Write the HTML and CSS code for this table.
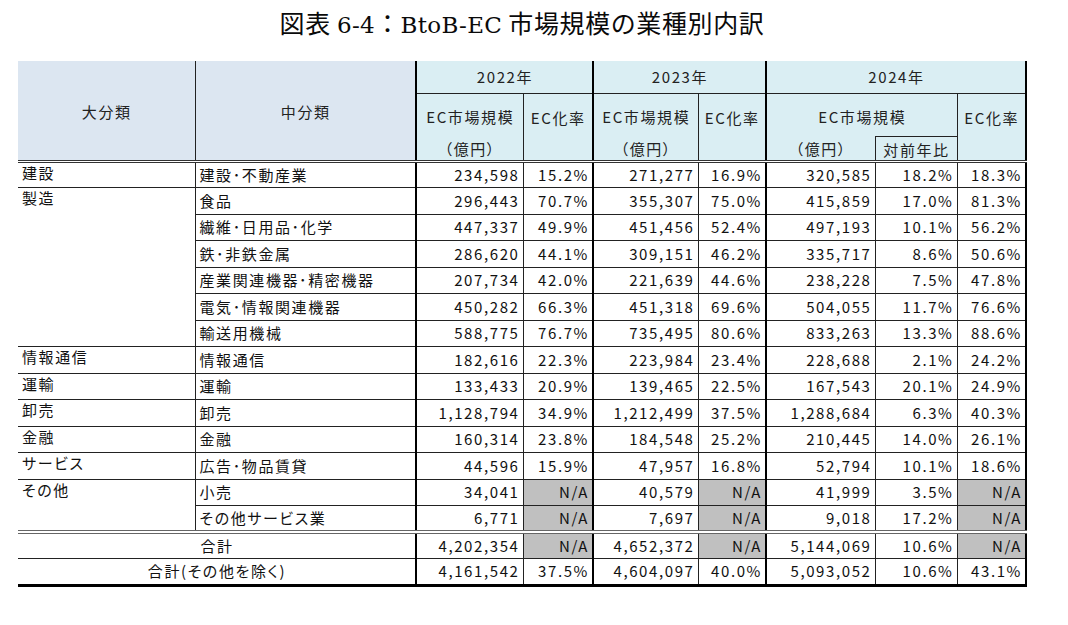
FILE: index.html
```html
<!DOCTYPE html>
<html lang="ja">
<head>
<meta charset="utf-8">
<title>BtoB-EC 市場規模の業種別内訳</title>
<link rel="stylesheet" href="styles.css">
</head>
<body>
<div class="page">
  <h1 class="title">図表 <span class="lat">6-4</span><span class="colon">：</span><span class="lat">BtoB-EC</span> 市場規模の業種別内訳</h1>
  <table class="tbl">
    <colgroup>
      <col class="w-dai"><col class="w-chu">
      <col class="w-m22"><col class="w-r22">
      <col class="w-m23"><col class="w-r23">
      <col class="w-m24"><col class="w-y24"><col class="w-r24">
    </colgroup>
    <thead>
      <tr class="h1">
        <th rowspan="3" class="hl dai">大分類</th>
        <th rowspan="3" class="hl chu">中分類</th>
        <th colspan="2" class="hy yr ys">2022年</th>
        <th colspan="2" class="hy yr ys">2023年</th>
        <th colspan="3" class="hy yr ys ye">2024年</th>
      </tr>
      <tr class="h2">
        <th class="hy mk ys">EC市場規模</th>
        <th rowspan="2" class="hy rt vl">EC化率</th>
        <th class="hy mk ys">EC市場規模</th>
        <th rowspan="2" class="hy rt vl">EC化率</th>
        <th colspan="2" class="hy mk ys">EC市場規模</th>
        <th rowspan="2" class="hy rt vl ye">EC化率</th>
      </tr>
      <tr class="h3">
        <th class="hy unit ys">（億円）</th>
        <th class="hy unit ys">（億円）</th>
        <th class="hy unit ys">（億円）</th>
        <th class="hy unit yoy">対前年比</th>
      </tr>
    </thead>
    <tbody>
      <tr class="first">
        <td class="dai">建設</td><td class="chu">建設･不動産業</td>
        <td class="n ys">234,598</td><td class="n vl">15.2%</td>
        <td class="n ys">271,277</td><td class="n vl">16.9%</td>
        <td class="n ys">320,585</td><td class="n vl">18.2%</td><td class="n vl ye">18.3%</td>
      </tr>
      <tr>
        <td class="dai" rowspan="6">製造</td><td class="chu">食品</td>
        <td class="n ys">296,443</td><td class="n vl">70.7%</td>
        <td class="n ys">355,307</td><td class="n vl">75.0%</td>
        <td class="n ys">415,859</td><td class="n vl">17.0%</td><td class="n vl ye">81.3%</td>
      </tr>
      <tr>
        <td class="chu">繊維･日用品･化学</td>
        <td class="n ys">447,337</td><td class="n vl">49.9%</td>
        <td class="n ys">451,456</td><td class="n vl">52.4%</td>
        <td class="n ys">497,193</td><td class="n vl">10.1%</td><td class="n vl ye">56.2%</td>
      </tr>
      <tr>
        <td class="chu">鉄･非鉄金属</td>
        <td class="n ys">286,620</td><td class="n vl">44.1%</td>
        <td class="n ys">309,151</td><td class="n vl">46.2%</td>
        <td class="n ys">335,717</td><td class="n vl">8.6%</td><td class="n vl ye">50.6%</td>
      </tr>
      <tr>
        <td class="chu">産業関連機器･精密機器</td>
        <td class="n ys">207,734</td><td class="n vl">42.0%</td>
        <td class="n ys">221,639</td><td class="n vl">44.6%</td>
        <td class="n ys">238,228</td><td class="n vl">7.5%</td><td class="n vl ye">47.8%</td>
      </tr>
      <tr>
        <td class="chu">電気･情報関連機器</td>
        <td class="n ys">450,282</td><td class="n vl">66.3%</td>
        <td class="n ys">451,318</td><td class="n vl">69.6%</td>
        <td class="n ys">504,055</td><td class="n vl">11.7%</td><td class="n vl ye">76.6%</td>
      </tr>
      <tr>
        <td class="chu">輸送用機械</td>
        <td class="n ys">588,775</td><td class="n vl">76.7%</td>
        <td class="n ys">735,495</td><td class="n vl">80.6%</td>
        <td class="n ys">833,263</td><td class="n vl">13.3%</td><td class="n vl ye">88.6%</td>
      </tr>
      <tr>
        <td class="dai">情報通信</td><td class="chu">情報通信</td>
        <td class="n ys">182,616</td><td class="n vl">22.3%</td>
        <td class="n ys">223,984</td><td class="n vl">23.4%</td>
        <td class="n ys">228,688</td><td class="n vl">2.1%</td><td class="n vl ye">24.2%</td>
      </tr>
      <tr>
        <td class="dai">運輸</td><td class="chu">運輸</td>
        <td class="n ys">133,433</td><td class="n vl">20.9%</td>
        <td class="n ys">139,465</td><td class="n vl">22.5%</td>
        <td class="n ys">167,543</td><td class="n vl">20.1%</td><td class="n vl ye">24.9%</td>
      </tr>
      <tr>
        <td class="dai">卸売</td><td class="chu">卸売</td>
        <td class="n ys">1,128,794</td><td class="n vl">34.9%</td>
        <td class="n ys">1,212,499</td><td class="n vl">37.5%</td>
        <td class="n ys">1,288,684</td><td class="n vl">6.3%</td><td class="n vl ye">40.3%</td>
      </tr>
      <tr>
        <td class="dai">金融</td><td class="chu">金融</td>
        <td class="n ys">160,314</td><td class="n vl">23.8%</td>
        <td class="n ys">184,548</td><td class="n vl">25.2%</td>
        <td class="n ys">210,445</td><td class="n vl">14.0%</td><td class="n vl ye">26.1%</td>
      </tr>
      <tr>
        <td class="dai">サービス</td><td class="chu">広告･物品賃貸</td>
        <td class="n ys">44,596</td><td class="n vl">15.9%</td>
        <td class="n ys">47,957</td><td class="n vl">16.8%</td>
        <td class="n ys">52,794</td><td class="n vl">10.1%</td><td class="n vl ye">18.6%</td>
      </tr>
      <tr>
        <td class="dai" rowspan="2">その他</td><td class="chu">小売</td>
        <td class="n ys">34,041</td><td class="n vl na">N/A</td>
        <td class="n ys">40,579</td><td class="n vl na">N/A</td>
        <td class="n ys">41,999</td><td class="n vl">3.5%</td><td class="n vl ye na">N/A</td>
      </tr>
      <tr>
        <td class="chu">その他サービス業</td>
        <td class="n ys">6,771</td><td class="n vl na">N/A</td>
        <td class="n ys">7,697</td><td class="n vl na">N/A</td>
        <td class="n ys">9,018</td><td class="n vl">17.2%</td><td class="n vl ye na">N/A</td>
      </tr>
      <tr class="total">
        <td class="sum" colspan="2">合計</td>
        <td class="n ys">4,202,354</td><td class="n vl na">N/A</td>
        <td class="n ys">4,652,372</td><td class="n vl na">N/A</td>
        <td class="n ys">5,144,069</td><td class="n vl">10.6%</td><td class="n vl ye na">N/A</td>
      </tr>
      <tr class="last">
        <td class="sum" colspan="2">合計(その他を除く)</td>
        <td class="n ys">4,161,542</td><td class="n vl">37.5%</td>
        <td class="n ys">4,604,097</td><td class="n vl">40.0%</td>
        <td class="n ys">5,093,052</td><td class="n vl">10.6%</td><td class="n vl ye">43.1%</td>
      </tr>
    </tbody>
  </table>
</div>
</body>
</html>
```

FILE: styles.css
```css
html, body {
  margin: 0;
  padding: 0;
  background: #ffffff;
}

body {
  font-family: "Noto Sans CJK JP", sans-serif;
  color: #111111;
}

.page {
  padding-left: 18px;
  width: 1012px;
}

.title {
  margin: 0;
  width: 1008px;
  height: 61px;
  line-height: 45px;
  text-align: center;
  font-size: 25px;
  font-weight: normal;
  letter-spacing: 0.6px;
  color: #0a0a0a;
  font-family: "Noto Sans CJK JP", serif;
}

.title .lat {
  font-family: "DejaVu Serif", "Liberation Serif", serif;
  font-size: 23px;
  letter-spacing: 0.3px;
}

.title .colon {
  font-family: "Noto Sans CJK JP", sans-serif;
}

.tbl {
  border-collapse: collapse;
  table-layout: fixed;
  width: 1008px;
  font-size: 15px;
  line-height: 20px;
  letter-spacing: 1.6px;
  font-feature-settings: "palt";
}

.w-dai { width: 177px; }
.w-chu { width: 221px; }
.w-m22 { width: 107px; }
.w-r22 { width: 70px; }
.w-m23 { width: 105px; }
.w-r23 { width: 68px; }
.w-m24 { width: 109px; }
.w-y24 { width: 82px; }
.w-r24 { width: 69px; }

.tbl th,
.tbl td {
  padding: 0 3px 0 4px;
  border: 0;
  white-space: nowrap;
  overflow: hidden;
}

.tbl th {
  font-weight: normal;
  color: #222;
  text-align: center;
}

/* header rows */
.tbl .h1 { height: 32px; }
.tbl .h2 { height: 43px; }
.tbl .h3 { height: 24px; }

.tbl th.hl {
  background: #dce6f1;
  vertical-align: middle;
  padding-top: 3px;
}

.tbl th.hl.dai {
  border-right: 1px solid #222;
}

.tbl th.hy {
  background: #daeef3;
}

.tbl th.yr {
  border-bottom: 1px solid #222;
  vertical-align: middle;
}

.tbl th.mk {
  vertical-align: middle;
  padding-top: 4px;
}

.tbl th.rt {
  vertical-align: top;
  padding-top: 14px;
}

.tbl th.unit {
  vertical-align: middle;
  padding-top: 3px;
}

.tbl th.yoy {
  border-top: 1px solid #222;
  border-left: 1px solid #222;
  border-right: 1px solid #222;
}

/* vertical rules */
.tbl .vl { border-left: 1px solid #222; }
.tbl .ys { border-left: 2px solid #000; }
.tbl .ye { border-right: 2px solid #000; }

/* body */
.tbl tbody tr {
  height: 26.5px;
}

.tbl tbody td {
  border-top: 1px solid #222;
  vertical-align: middle;
}

.tbl tbody tr.first td {
  border-top: 3px double #333;
}

.tbl td.dai {
  vertical-align: top;
  text-align: left;
  padding-top: 0;
  border-right: 1px solid #222;
}

.tbl td.chu {
  text-align: left;
}

.tbl td.n {
  text-align: right;
}

.tbl td.na {
  background: #c0c0c0;
}

.tbl td.sum {
  text-align: center;
}

.tbl tbody tr.total td {
  border-top: 4px double #666;
}

.tbl tbody tr.last td {
  border-bottom: 3px solid #000;
}
```
